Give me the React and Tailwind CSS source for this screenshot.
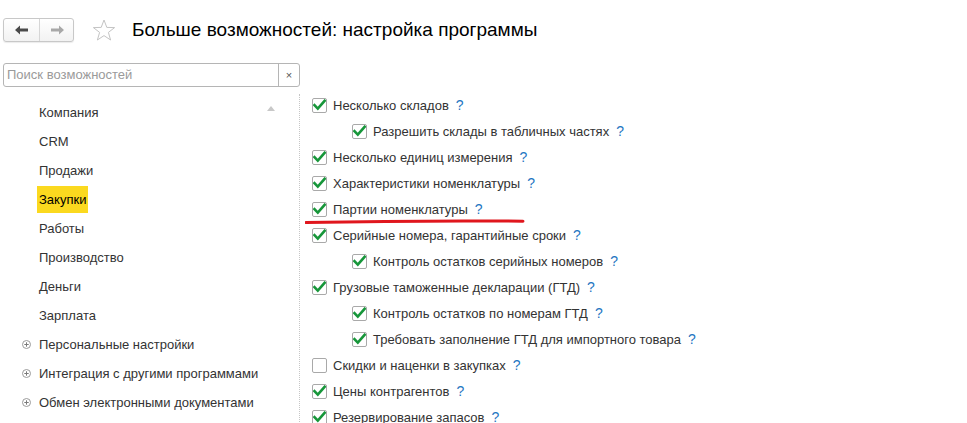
import React from 'react';

const sections = ['Компания', 'CRM', 'Продажи', 'Закупки', 'Работы', 'Производство', 'Деньги', 'Зарплата'];
const groups = ['Персональные настройки', 'Интеграция с другими программами', 'Обмен электронными документами'];

const options = [
  { label: 'Несколько складов', checked: true },
  { label: 'Разрешить склады в табличных частях', checked: true, nested: true },
  { label: 'Несколько единиц измерения', checked: true },
  { label: 'Характеристики номенклатуры', checked: true },
  { label: 'Партии номенклатуры', checked: true },
  { label: 'Серийные номера, гарантийные сроки', checked: true },
  { label: 'Контроль остатков серийных номеров', checked: true, nested: true },
  { label: 'Грузовые таможенные декларации (ГТД)', checked: true },
  { label: 'Контроль остатков по номерам ГТД', checked: true, nested: true },
  { label: 'Требовать заполнение ГТД для импортного товара', checked: true, nested: true },
  { label: 'Скидки и наценки в закупках', checked: false },
  { label: 'Цены контрагентов', checked: true },
  { label: 'Резервирование запасов', checked: true },
];

const Checkbox = ({ checked }) => (
  <span className="flex h-[15px] w-[15px] shrink-0 items-center justify-center rounded-[2px] border border-[#a9a9a9] bg-white">
    {checked && (
      <svg width="13" height="12" viewBox="0 0 13 12">
        <path d="M1.5 6.2 L4.8 9.6 L11.6 1.8" fill="none" stroke="#17963a" strokeWidth="2.6" strokeLinecap="square" />
      </svg>
    )}
  </span>
);

const App = () => {
  return (
    <div className="relative h-[423px] w-[967px] overflow-hidden bg-white text-[13px] text-[#333] [font-family:'Liberation_Sans',Arial,sans-serif]">
      <header className="flex items-center pl-[3px] pt-[18px]">
        <div className="flex h-[24px] w-[71px] rounded-[3px] border border-[#c8c8c8] bg-gradient-to-b from-white to-[#f2f2f2] shadow-[0_1px_1px_rgba(0,0,0,0.08)]">
          <button className="flex w-[36px] items-center justify-center border-r border-[#d6d6d6]">
            <svg width="14" height="10" viewBox="0 0 14 10">
              <path d="M0 5 L5 0.5 L5 3.6 L13 3.6 L13 6.4 L5 6.4 L5 9.5 Z" fill="#4a4a4a" />
            </svg>
          </button>
          <button className="flex flex-1 items-center justify-center">
            <svg width="14" height="10" viewBox="0 0 14 10">
              <path d="M14 5 L9 0.5 L9 3.6 L1 3.6 L1 6.4 L9 6.4 L9 9.5 Z" fill="#a8a8a8" />
            </svg>
          </button>
        </div>
        <svg className="ml-[18px]" width="24" height="23" viewBox="0 0 24 23">
          <path
            d="M12 1 L14.8 8.4 L22.6 8.6 L16.4 13.4 L18.6 21 L12 16.6 L5.4 21 L7.6 13.4 L1.4 8.6 L9.2 8.4 Z"
            fill="none"
            stroke="#c4c4c4"
            strokeWidth="1"
            strokeLinejoin="miter"
          />
        </svg>
        <h1 className="ml-[16px] text-[19px] leading-[24px] text-black">Больше возможностей: настройка программы</h1>
      </header>

      <div className="ml-[3px] mt-[21px] flex h-[24px] w-[297px] rounded-[3px] border border-[#b5b5b5] bg-white">
        <input
          className="min-w-0 flex-1 bg-transparent px-[3px] text-[13px] text-[#333] outline-none placeholder:text-[#9a9a9a]"
          placeholder="Поиск возможностей"
        />
        <button className="flex w-[21px] items-center justify-center border-l border-[#b5b5b5] text-[11px] text-[#555]">
          ×
        </button>
      </div>

      <main className="flex">
        <aside className="relative mt-[7px] w-[300px] shrink-0 border-r border-dotted border-[#c6c6c6] pt-[4px]">
          <span className="absolute right-[24px] top-[12px] h-0 w-0 border-x-[4px] border-b-[5px] border-x-transparent border-b-[#c8c8c8]" />
          {sections.map((s) => (
            <div key={s} className="flex h-[29px] items-center pl-[37px]">
              <span className={`px-[2px] py-[6px] leading-[15px] ${s === 'Закупки' ? 'bg-[#fbd91f] text-black' : ''}`}>{s}</span>
            </div>
          ))}
          {groups.map((g) => (
            <div key={g} className="flex h-[29px] items-center pl-[22px]">
              <svg width="9" height="9" viewBox="0 0 9 9" className="mr-[8px]">
                <circle cx="4.5" cy="4.5" r="4" fill="none" stroke="#9a9a9a" />
                <path d="M2.3 4.5 H6.7 M4.5 2.3 V6.7" stroke="#7a7a7a" strokeWidth="1" />
              </svg>
              <span className="leading-[15px]">{g}</span>
            </div>
          ))}
        </aside>

        <section className="flex-1 pl-[12px] pt-[5px]">
          {options.map((o) => (
            <div key={o.label} className={`flex h-[26px] items-center gap-[6px] ${o.nested ? 'pl-[40px]' : ''}`}>
              <Checkbox checked={o.checked} />
              <span className="leading-[15px]">{o.label}</span>
              <span className="ml-[1px] text-[14px] leading-[15px] text-[#1f76c2]">?</span>
            </div>
          ))}
        </section>
      </main>

      <svg className="absolute left-[305px] top-[217px]" width="220" height="10" viewBox="0 0 220 10">
        <path d="M1 5.5 Q110 3.4 218 4.2" fill="none" stroke="#e0161d" strokeWidth="3" strokeLinecap="round" />
      </svg>
    </div>
  );
};

export default App;
